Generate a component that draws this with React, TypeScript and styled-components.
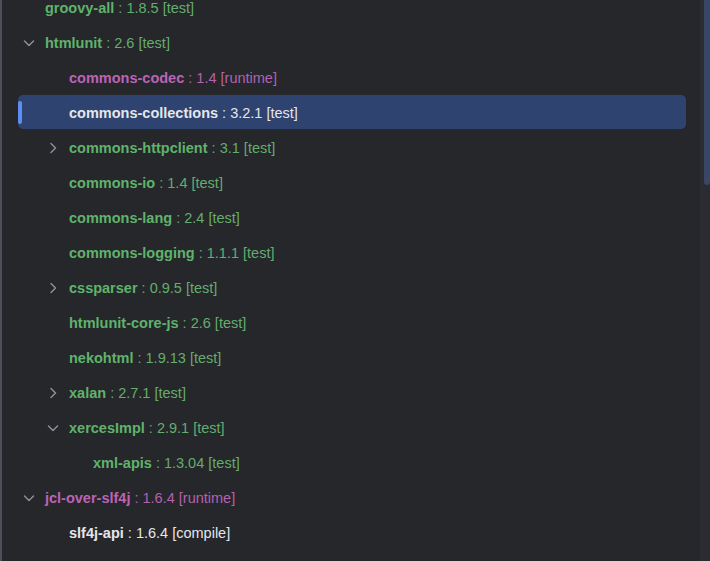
import React from "react";
import styled, { createGlobalStyle } from "styled-components";

const Global = createGlobalStyle`
  html, body { margin: 0; padding: 0; background: #26272b; }
  body { font-family: "Liberation Sans", Arial, sans-serif; }
`;

type Tone = "green" | "purple" | "white";

const nameColors: Record<Tone, string> = {
  green: "#5fb36b",
  purple: "#bb64b6",
  white: "#e4e6ea",
};
const infoColors: Record<Tone, string> = {
  green: "#63ad6e",
  purple: "#b262b0",
  white: "#e4e6ea",
};

const Frame = styled.div`
  display: flex;
  width: 100vw;
  height: 100vh;
  overflow: hidden;
  background: #26272b;
`;

const Edge = styled.div`
  flex: 0 0 2px;
  background: #4d5058;
`;

const TreeArea = styled.div`
  flex: 1;
  padding: 0 14px 0 16px;
  overflow: hidden;
`;

const List = styled.ul`
  list-style: none;
  margin: -10px 0 0 0;
  padding: 0;
`;

const Row = styled.li<{ $level: number; $selected?: boolean }>`
  position: relative;
  display: flex;
  align-items: center;
  gap: 8px;
  height: 34px;
  box-sizing: border-box;
  padding-top: 2px;
  margin-bottom: 1px;
  padding-left: ${(p) => 3 + p.$level * 24}px;
  border-radius: 5px;
  background: ${(p) => (p.$selected ? "#2e436f" : "transparent")};
  font-size: 14.5px;
  white-space: nowrap;
  ${(p) =>
    p.$selected &&
    `
    &::before {
      content: "";
      position: absolute;
      left: 0;
      top: 6px;
      width: 4px;
      height: 23px;
      border-radius: 2px;
      background: #5b8ff4;
    }
  `}
`;

const Toggle = styled.span`
  flex: 0 0 16px;
  width: 16px;
  height: 16px;
  display: flex;
  align-items: center;
  justify-content: center;
  color: #8b8e95;
`;

const Name = styled.span<{ $tone: Tone }>`
  font-weight: 700;
  color: ${(p) => nameColors[p.$tone]};
`;

const Info = styled.span<{ $tone: Tone }>`
  color: ${(p) => infoColors[p.$tone]};
`;

const Track = styled.div`
  flex: 0 0 10px;
  background: #2b2c31;
  display: flex;
  justify-content: flex-end;
  align-items: flex-start;
`;

const Thumb = styled.div`
  width: 6px;
  height: 185px;
  background: #3a4665;
  border-radius: 0 0 3px 3px;
`;

type Node = {
  name: string;
  version: string;
  scope: string;
  level: number;
  tone: Tone;
  toggle?: "open" | "closed";
  selected?: boolean;
};

const nodes: Node[] = [
  { name: "groovy-all", version: "1.8.5", scope: "test", level: 0, tone: "green" },
  { name: "htmlunit", version: "2.6", scope: "test", level: 0, tone: "green", toggle: "open" },
  { name: "commons-codec", version: "1.4", scope: "runtime", level: 1, tone: "purple" },
  { name: "commons-collections", version: "3.2.1", scope: "test", level: 1, tone: "white", selected: true },
  { name: "commons-httpclient", version: "3.1", scope: "test", level: 1, tone: "green", toggle: "closed" },
  { name: "commons-io", version: "1.4", scope: "test", level: 1, tone: "green" },
  { name: "commons-lang", version: "2.4", scope: "test", level: 1, tone: "green" },
  { name: "commons-logging", version: "1.1.1", scope: "test", level: 1, tone: "green" },
  { name: "cssparser", version: "0.9.5", scope: "test", level: 1, tone: "green", toggle: "closed" },
  { name: "htmlunit-core-js", version: "2.6", scope: "test", level: 1, tone: "green" },
  { name: "nekohtml", version: "1.9.13", scope: "test", level: 1, tone: "green" },
  { name: "xalan", version: "2.7.1", scope: "test", level: 1, tone: "green", toggle: "closed" },
  { name: "xercesImpl", version: "2.9.1", scope: "test", level: 1, tone: "green", toggle: "open" },
  { name: "xml-apis", version: "1.3.04", scope: "test", level: 2, tone: "green" },
  { name: "jcl-over-slf4j", version: "1.6.4", scope: "runtime", level: 0, tone: "purple", toggle: "open" },
  { name: "slf4j-api", version: "1.6.4", scope: "compile", level: 1, tone: "white" },
];

const Chevron = ({ open }: { open: boolean }) => (
  <svg width="16" height="16" viewBox="0 0 16 16" fill="none">
    <path
      d={open ? "M3.5 6 L8 10.5 L12.5 6" : "M6 3.5 L10.5 8 L6 12.5"}
      stroke="currentColor"
      strokeWidth="1.5"
      strokeLinecap="round"
      strokeLinejoin="round"
    />
  </svg>
);

export default function App() {
  return (
    <>
      <Global />
      <Frame>
        <Edge />
        <TreeArea>
          <List>
            {nodes.map((n) => (
              <Row key={n.name} $level={n.level} $selected={n.selected}>
                <Toggle>{n.toggle && <Chevron open={n.toggle === "open"} />}</Toggle>
                <span>
                  <Name $tone={n.tone}>{n.name}</Name>
                  <Info $tone={n.tone}>
                    {" "}: {n.version} [{n.scope}]
                  </Info>
                </span>
              </Row>
            ))}
          </List>
        </TreeArea>
        <Track>
          <Thumb />
        </Track>
      </Frame>
    </>
  );
}
